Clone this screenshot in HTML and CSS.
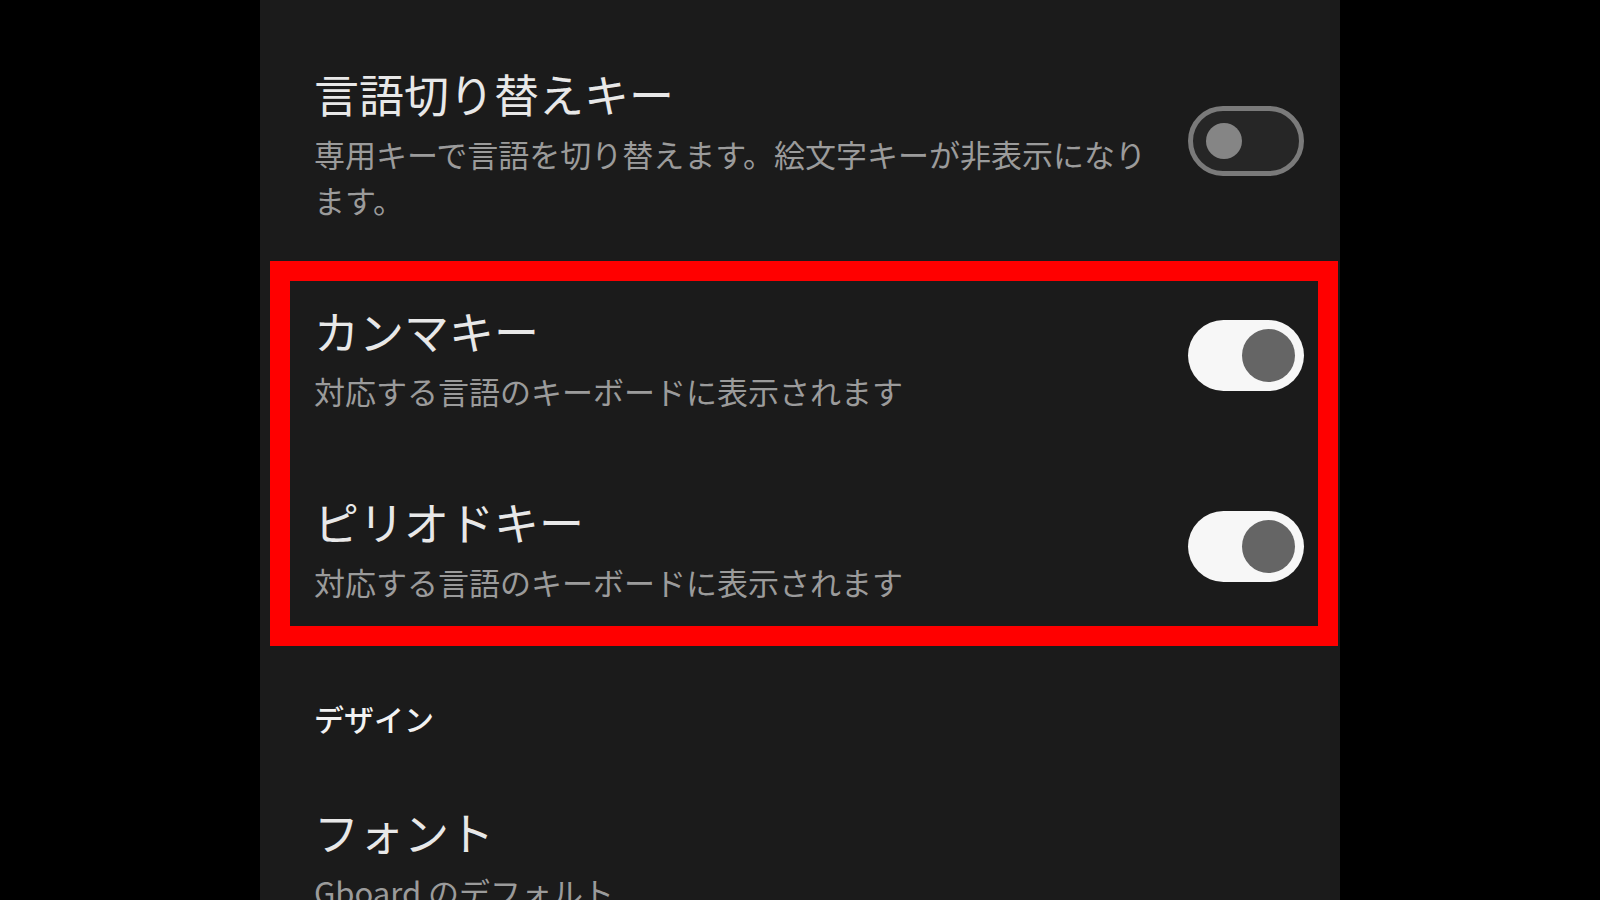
FILE: index.html
```html
<!DOCTYPE html>
<html lang="ja">
<head>
<meta charset="utf-8">
<title>設定</title>
<link rel="stylesheet" href="styles.css">
</head>
<body>
<div class="panel">
  <div class="row">
    <div class="text">
      <div class="title">言語切り替えキー</div>
      <div class="sub">専用キーで言語を切り替えます。絵文字キーが非表示になります。</div>
    </div>
    <div class="toggle toggle-off"><span class="thumb"></span></div>
  </div>

  <div class="group highlighted">
    <div class="row">
      <div class="text">
        <div class="title">カンマキー</div>
        <div class="sub">対応する言語のキーボードに表示されます</div>
      </div>
      <div class="toggle toggle-on"><span class="thumb"></span></div>
    </div>
    <div class="row">
      <div class="text">
        <div class="title">ピリオドキー</div>
        <div class="sub">対応する言語のキーボードに表示されます</div>
      </div>
      <div class="toggle toggle-on"><span class="thumb"></span></div>
    </div>
  </div>

  <div class="section-header">デザイン</div>

  <div class="row">
    <div class="text">
      <div class="title">フォント</div>
      <div class="sub">Gboard のデフォルト</div>
    </div>
  </div>
</div>
</body>
</html>
```

FILE: styles.css
```css
html, body {
  margin: 0;
  padding: 0;
  background: #000;
  height: 900px;
  overflow: hidden;
}

body {
  font-family: "Noto Sans CJK JP", "Noto Sans", sans-serif;
}

.panel {
  width: 1080px;
  height: 900px;
  margin-left: 260px;
  background: #1b1b1b;
  padding-top: 27px;
  box-sizing: border-box;
  overflow: hidden;
}

.row {
  display: flex;
  align-items: center;
  gap: 28px;
  padding: 40px 36px 41px 54px;
}

.text {
  flex: 1;
  min-width: 0;
}

.title {
  font-size: 45px;
  line-height: 54px;
  color: #e8e8e8;
}

.sub {
  margin-top: 10px;
  font-size: 31px;
  line-height: 46px;
  color: #9b9b9b;
}

.toggle {
  flex: none;
  position: relative;
  width: 116px;
  height: 71px;
  border-radius: 36px;
  box-sizing: border-box;
  margin-bottom: 8px;
  display: flex;
  align-items: center;
}

.toggle-off {
  height: 70px;
  border: 5px solid #7a7a7a;
  background: #262626;
  padding-left: 13px;
}

.toggle-off .thumb {
  width: 36px;
  height: 36px;
  border-radius: 50%;
  background: #858585;
}

.toggle-on {
  background: #f7f7f7;
  justify-content: flex-end;
  padding-right: 9px;
}

.toggle-on .thumb {
  width: 53px;
  height: 53px;
  border-radius: 50%;
  background: #656565;
}

.group {
  position: relative;
}

.highlighted::after {
  content: "";
  position: absolute;
  top: -3px;
  bottom: 0;
  left: 10px;
  right: 2px;
  border: 20px solid #ff0000;
  pointer-events: none;
}

.section-header {
  padding: 52px 0 27px 54px;
  font-size: 30px;
  line-height: 40px;
  font-weight: 500;
  color: #f2f2f2;
}
```
